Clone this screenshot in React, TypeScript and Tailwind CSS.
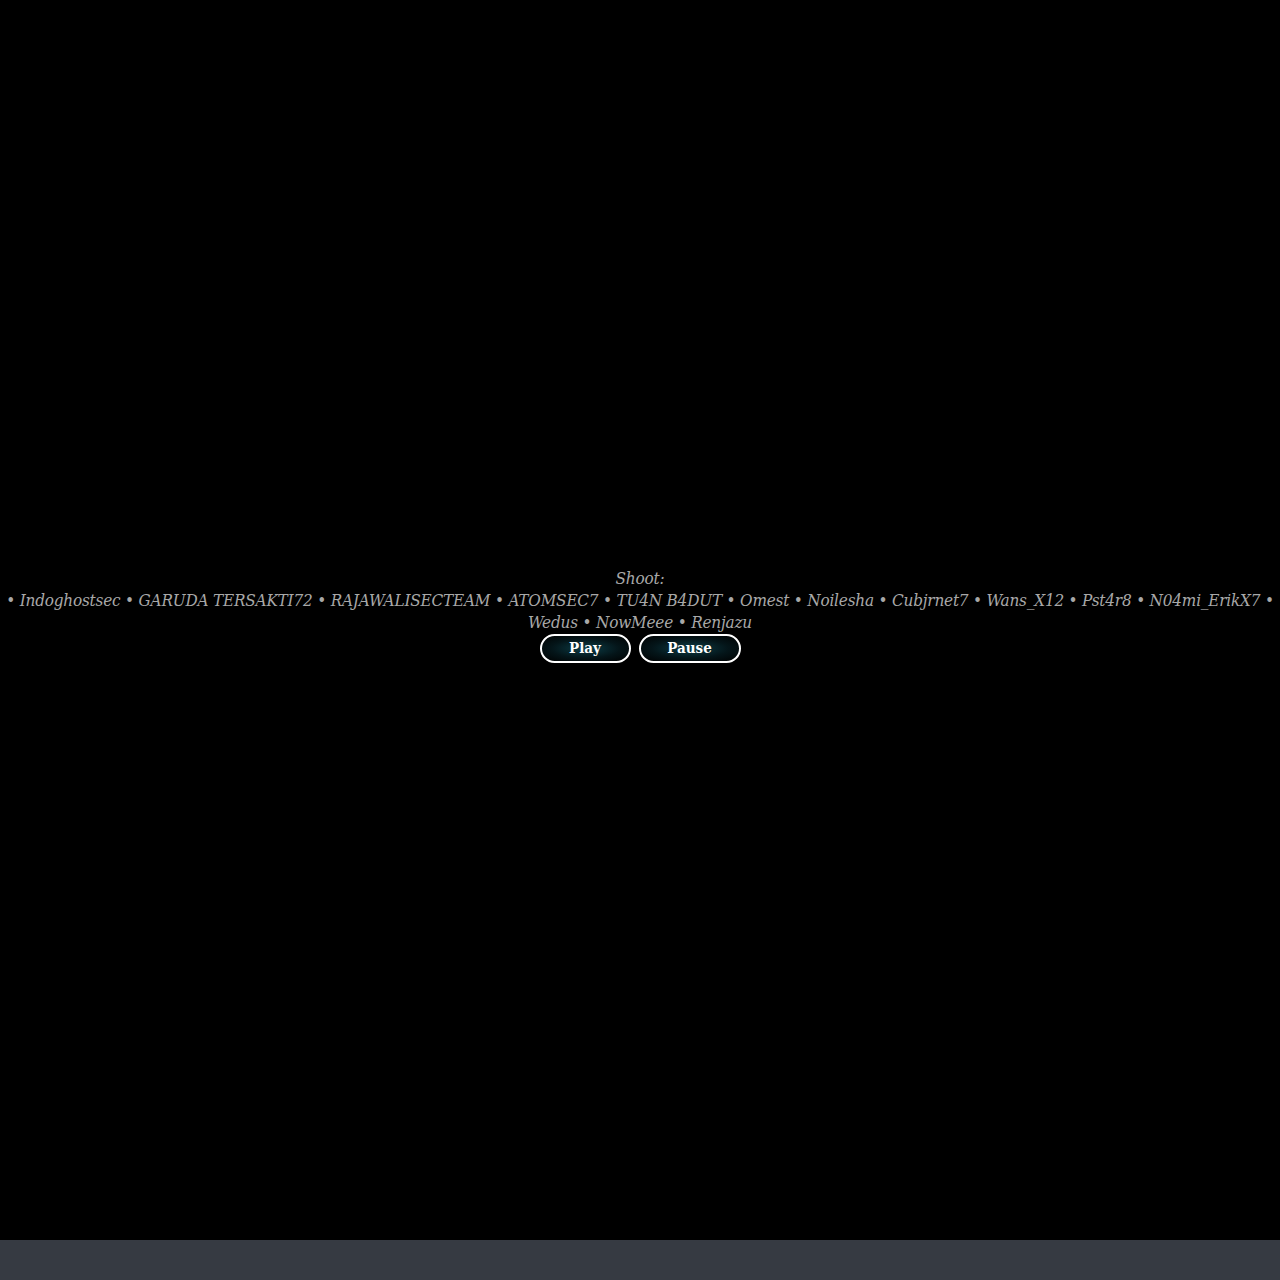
import React from 'react';

const crew = [
  'Indoghostsec',
  'GARUDA TERSAKTI72',
  'RAJAWALISECTEAM',
  'ATOMSEC7',
  'TU4N B4DUT',
  'Omest',
  'Noilesha',
  'Cubjrnet7',
  'Wans_X12',
  'Pst4r8',
  'N04mi_ErikX7',
  'Wedus',
  'NowMeee',
  'Renjazu',
];

export default function App() {
  const [playing, setPlaying] = React.useState(false);

  return (
    <div className="min-h-screen bg-[#363a42]">
      <div className="h-[1240px] bg-black flex flex-col items-center justify-center pb-[10px] font-['DejaVu_Serif_Condensed','DejaVu_Serif',serif]">
        <div className="text-center text-[#a8a8a8] italic text-[17px] tracking-[-0.2px] leading-[22px]">
          <p>Shoot:</p>
          <p>{' • ' + crew.join(' • ')}</p>
        </div>
        <div className="flex gap-2 mt-[1px]">
          <button
            onClick={() => setPlaying(true)}
            className={`w-[91px] h-[29px] rounded-[15px] border-2 border-white text-white font-bold text-[15px] bg-[radial-gradient(ellipse_at_center,#0c3e48_0%,#041519_55%,#000_100%)] ${playing ? 'shadow-[0_0_10px_rgba(0,180,210,0.4)]' : ''}`}
          >
            Play
          </button>
          <button
            onClick={() => setPlaying(false)}
            className="w-[102px] h-[29px] rounded-[15px] border-2 border-white text-white font-bold text-[15px] bg-[radial-gradient(ellipse_at_center,#0c3e48_0%,#041519_55%,#000_100%)]"
          >
            Pause
          </button>
        </div>
      </div>
    </div>
  );
}
